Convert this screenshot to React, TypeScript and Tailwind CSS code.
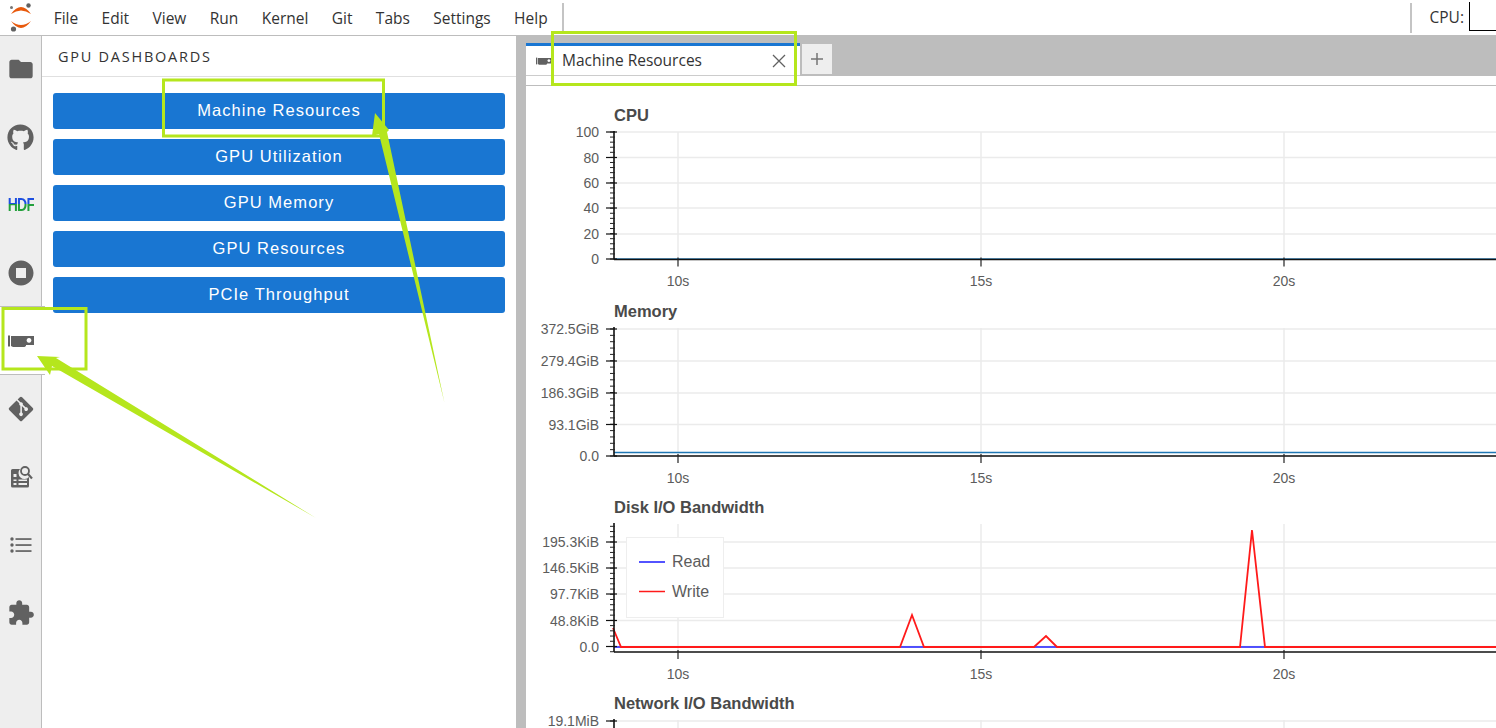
import React from "react";
import { FaGithub, FaGitAlt } from "react-icons/fa";

const UI = "font-['Open_Sans','Noto_Sans',sans-serif]";
const GRAY = "#616161";

function GpuIcon({ className }: { className?: string }) {
  return (
    <svg viewBox="0 0 26 12" className={className} fill={GRAY}>
      <rect x="0" y="0.5" width="2" height="11" />
      <path fillRule="evenodd" d="M3 1h23v9h-8v1l-1.5 1H5l-2-1zM21 3a2.400 2.400 0 1 0 0.010 0z" />
    </svg>
  );
}

const sideIcons: React.ReactNode[] = [
  <svg key="f" viewBox="0 0 24 24" className="w-7 h-7" fill={GRAY}>
    <path d="M10 4H4c-1.100 0-1.990.9-1.990 2L2 18c0 1.100.9 2 2 2h16c1.100 0 2-.9 2-2V8c0-1.100-.9-2-2-2h-8l-2-2z" />
  </svg>,
  <FaGithub key="g" className="w-[27px] h-[27px] text-[#616161]" />,
  <span
    key="h"
    className="font-['Liberation_Sans',sans-serif] font-bold text-[18px] leading-[14px] tracking-[-1px] scale-x-[0.78] bg-[linear-gradient(180deg,#1d4fe0_0%,#1d4fe0_40%,#23a03c_40%,#23a03c_100%)] bg-clip-text text-transparent"
  >
    HDF
  </span>,
  <svg key="s" viewBox="0 0 24 24" className="w-[30px] h-[30px]" fill={GRAY}>
    <path d="M12 2C6.480 2 2 6.480 2 12s4.480 10 10 10 10-4.480 10-10S17.520 2 12 2zm4 14H8V8h8v8z" />
  </svg>,
  <GpuIcon key="c" className="w-[26px] h-3" />,
  <FaGitAlt key="a" className="w-[28px] h-[28px] text-[#616161]" />,
  <svg key="d" viewBox="0 0 24 24" className="w-6 h-6" fill={GRAY}>
    <path
      fillRule="evenodd"
      d="M2 5.500Q2 4 3.500 4H11a6 6 0 0 0 9 8v9q0 1.500-1.500 1.500h-15Q2 22.500 2 21zM4.500 9v3h3V9zM4.500 14.500V16h3v-1.500zM9.500 14.500V16h8.500v-1.500zM4.500 18v2h3v-2zM9.500 18v2h8.500v-2z"
    />
    <circle cx="16" cy="6" r="4" fill="none" stroke={GRAY} strokeWidth="1.800" />
    <line x1="19" y1="9" x2="23" y2="13.500" stroke={GRAY} strokeWidth="2.200" />
  </svg>,
  <svg key="l" viewBox="0 0 22 16" className="w-[22px] h-4" fill={GRAY}>
    <circle cx="2" cy="2" r="1.700" />
    <circle cx="2" cy="8" r="1.700" />
    <circle cx="2" cy="14" r="1.700" />
    <rect x="5.500" y="1.200" width="16" height="1.700" />
    <rect x="5.500" y="7.200" width="16" height="1.700" />
    <rect x="5.500" y="13.200" width="16" height="1.700" />
  </svg>,
  <svg key="p" viewBox="0 0 24 24" className="w-7 h-7" fill={GRAY}>
    <path d="M20.500 11H19V7c0-1.100-.9-2-2-2h-4V3.500C13 2.120 11.880 1 10.500 1S8 2.120 8 3.500V5H4c-1.100 0-1.990.9-1.990 2v3.800H3.500c1.490 0 2.700 1.210 2.700 2.700s-1.210 2.700-2.700 2.700H2V20c0 1.100.9 2 2 2h3.800v-1.500c0-1.490 1.210-2.700 2.700-2.700 1.490 0 2.700 1.210 2.700 2.700V22H17c1.100 0 2-.9 2-2v-4h1.500c1.380 0 2.500-1.120 2.500-2.500S21.880 11 20.500 11z" />
  </svg>,
];

const menus = ["File", "Edit", "View", "Run", "Kernel", "Git", "Tabs", "Settings", "Help"];
const buttons = ["Machine Resources", "GPU Utilization", "GPU Memory", "GPU Resources", "PCIe Throughput"];

type Tick = { label: string; y: number };
type ChartSpec = {
  title: string;
  ticks: Tick[];
  axisY: number;
  topY: number;
  xLabels?: boolean;
  children?: React.ReactNode;
};

// Chart coordinates: x is page x - 526; y is measured from the top of the svg.
const PLOT_X = 88;
const GRID_X = [152, 455, 758];

function Chart({ title, ticks, axisY, topY, xLabels = true, children }: ChartSpec) {
  const step = ticks.length > 1 ? (ticks[ticks.length - 1].y - ticks[0].y) / (ticks.length - 1) : 26;
  const minors: number[] = [];
  const base = ticks[ticks.length - 1].y;
  for (let i = 0; ; i++) {
    const y = base - (i * step) / 5;
    if (y < topY - 0.5) break;
    minors.push(y);
  }
  for (let i = 1; base + (i * step) / 5 < axisY; i++) minors.push(base + (i * step) / 5);
  return (
    <div className="h-[196px] shrink-0 overflow-hidden">
      <div className="h-[18px] pl-[88px] font-['Liberation_Sans',sans-serif] text-[16.500px] leading-[18px] font-bold text-[#4a4a4a]">
        {title}
      </div>
      <svg width="970" height="178" className="block font-['Liberation_Sans',sans-serif]">
        {GRID_X.map((x) => (
          <line key={x} x1={x} x2={x} y1={topY} y2={axisY} stroke="#ebebeb" strokeWidth="1.500" />
        ))}
        {ticks.map((t) => (
          <line key={t.y} x1={PLOT_X} x2={970} y1={t.y} y2={t.y} stroke="#ebebeb" strokeWidth="1.500" />
        ))}
        {children}
        <line x1={PLOT_X} x2={970} y1={axisY} y2={axisY} stroke="#111" strokeWidth="1.300" />
        <line x1={PLOT_X} x2={PLOT_X} y1={topY - 1} y2={axisY} stroke="#111" strokeWidth="1.600" />
        {minors.map((y) => (
          <line key={y} x1={PLOT_X - 4} x2={PLOT_X + 1} y1={y} y2={y} stroke="#222" strokeWidth="1" />
        ))}
        {ticks.map((t) => (
          <g key={t.y}>
            <line x1={PLOT_X - 8} x2={PLOT_X + 3} y1={t.y} y2={t.y} stroke="#111" strokeWidth="1.200" />
            <text x={PLOT_X - 15} y={t.y + 5} textAnchor="end" fontSize="14" fill="#5c5c5c">
              {t.label}
            </text>
          </g>
        ))}
        {xLabels &&
          GRID_X.map((x, i) => (
            <g key={x}>
              <line x1={x} x2={x} y1={axisY - 2} y2={axisY + 7} stroke="#222" strokeWidth="1.200" />
              <text x={x} y={Math.floor(axisY) + 27} textAnchor="middle" fontSize="14" fill="#5c5c5c">
                {["10s", "15s", "20s"][i]}
              </text>
            </g>
          ))}
      </svg>
    </div>
  );
}

function Annotations() {
  const G = "#b5e61d";
  return (
    <svg width="1496" height="728" className="absolute left-0 top-0 z-20 pointer-events-none">
      <rect x="163.500" y="80" width="220" height="56" fill="none" stroke={G} strokeWidth="3" />
      <rect x="552.500" y="32.500" width="243" height="52" fill="none" stroke={G} strokeWidth="3" />
      <rect x="3" y="308.500" width="83" height="60.500" fill="none" stroke={G} strokeWidth="3" />
      <polygon fill={G} points="444.500,403 387,132 389,130 375,113 372,136 379,134" />
      <polygon fill={G} points="316,518 56,358 60,357 37,356 50,375 52,366" />
    </svg>
  );
}

export default function App() {
  const toX = (x: number) => x - 526;
  const diskY = (y: number) => y - 516;
  const red = [
    [613, 628], [621, 647], [900, 647], [912, 615], [924, 647], [1034, 647], [1046, 636],
    [1057, 647], [1240, 647], [1252, 530], [1265, 647], [1496, 647],
  ]
    .map(([x, y]) => `${toX(x)},${diskY(y)}`)
    .join(" ");

  return (
    <div className={`relative w-[1496px] h-[728px] overflow-hidden bg-white ${UI}`}>
      {/* Top bar */}
      <header className="h-9 flex items-center border-b border-[#bdbdbd] bg-white">
        <div className="w-[42px] shrink-0 flex justify-start pl-[8.500px]">
          <svg width="24" height="30" viewBox="0 0 24 30">
            <path d="M2 11Q12 -3 22 11Q12 4 2 11z" fill="#e8590c" />
            <path d="M2 18Q12 32 22 18Q12 26 2 18z" fill="#e8590c" />
            <circle cx="2.500" cy="4.500" r="1.500" fill="#757575" />
            <circle cx="19.500" cy="2.500" r="2.200" fill="#616161" />
            <circle cx="4.500" cy="26" r="2.600" fill="#616161" />
          </svg>
        </div>
        <nav className="flex items-center text-[15.500px] text-[#333333]">
          {menus.map((m) => (
            <span key={m} className="px-[11.700px] leading-5">
              {m}
            </span>
          ))}
        </nav>
        <div className="ml-[3px] h-[30px] w-0.5 bg-[#c4c4c4]" />
        <div className="ml-auto flex items-center h-full">
          <div className="h-[30px] w-0.5 bg-[#c4c4c4]" />
          <span className="ml-[18px] text-[15.500px] text-[#333333]">CPU:</span>
          <div className="ml-[5px] mb-[3px] h-[29px] w-[27px] border-l border-b border-black" />
        </div>
      </header>

      <div className="flex h-[692px]">
        {/* Activity bar */}
        <aside className="w-[42px] shrink-0 flex flex-col bg-[#eeeeee] border-r border-[#bdbdbd]">
          <div className="-mt-px flex flex-col">
            {sideIcons.map((icon, i) => (
              <div
                key={i}
                className={
                  i === 4
                    ? "-mt-px h-[69px] w-[45px] shrink-0 flex items-center pl-2 bg-white border-y border-[#bdbdbd] z-10"
                    : "h-[68px] shrink-0 flex items-center justify-center"
                }
              >
                {icon}
              </div>
            ))}
          </div>
        </aside>

        {/* Side panel */}
        <section className="w-[474px] shrink-0 bg-white">
          <div className="h-[41px] flex items-center pl-4 pt-[2px] border-b border-[#e0e0e0] text-[14.500px] tracking-[1.750px] text-[#333333]">
            GPU DASHBOARDS
          </div>
          <div className="flex flex-col gap-2.5 pl-[11px] pr-[11px] pt-4">
            {buttons.map((b) => (
              <div
                key={b}
                className="h-9 pb-[2px] rounded-[3px] bg-[#1976d2] flex items-center justify-center text-white font-['Liberation_Sans',sans-serif] text-[16.500px] tracking-[1.050px]"
              >
                {b}
              </div>
            ))}
          </div>
        </section>

        {/* Main area */}
        <main className="flex-1 min-w-0 bg-[#bdbdbd] pl-2.5 flex flex-col">
          <div className="h-10 shrink-0 flex items-start pt-[7px]">
            <div className="w-[274px] h-[33px] bg-white border-t-[3px] border-[#1976d2] flex items-center pl-2.5 pr-2 border-b border-b-[#cccccc]">
              <GpuIcon className="w-4 h-2 mr-[10px]" />
              <span className="text-[15.500px] text-[#333333] flex-1">Machine Resources</span>
              <svg width="14" height="14" viewBox="0 0 14 14" className="mr-[6px]">
                <path d="M1 1l12 12M13 1L1 13" stroke="#616161" strokeWidth="1.300" />
              </svg>
            </div>
            <div className="ml-0.5 w-[30px] h-[30px] mt-px bg-[#eeeeee] flex items-center justify-center">
              <svg width="14" height="14" viewBox="0 0 14 14">
                <path d="M7 1v12M1 7h12" stroke="#757575" strokeWidth="1.500" />
              </svg>
            </div>
          </div>
          <div className="h-2.5 shrink-0 bg-white border-b border-[#bdbdbd]" />
          <div className="flex-1 min-h-0 bg-white pt-5 flex flex-col overflow-hidden">
            <Chart
              title="CPU"
              topY={8}
              axisY={135.500}
              ticks={[
                { label: "100", y: 8 },
                { label: "80", y: 33.500 },
                { label: "60", y: 59 },
                { label: "40", y: 84 },
                { label: "20", y: 110 },
                { label: "0", y: 135 },
              ]}
            >
              <line x1={88} x2={970} y1={134.800} y2={134.800} stroke="#1f77b4" strokeWidth="1" />
            </Chart>
            <Chart
              title="Memory"
              topY={8}
              axisY={136}
              ticks={[
                { label: "372.5GiB", y: 9 },
                { label: "279.4GiB", y: 41 },
                { label: "186.3GiB", y: 73 },
                { label: "93.1GiB", y: 104.500 },
                { label: "0.0", y: 136 },
              ]}
            >
              <line x1={88} x2={970} y1={132.500} y2={132.500} stroke="#1f77b4" strokeWidth="1.500" />
            </Chart>
            <Chart
              title="Disk I/O Bandwidth"
              topY={8}
              axisY={136}
              ticks={[
                { label: "195.3KiB", y: 26 },
                { label: "146.5KiB", y: 52 },
                { label: "97.7KiB", y: 78 },
                { label: "48.8KiB", y: 104.500 },
                { label: "0.0", y: 130.500 },
              ]}
            >
              <line x1={88} x2={970} y1={131} y2={131} stroke="#1a1aff" strokeWidth="1.500" />
              <polyline points={red} fill="none" stroke="#ff1a1a" strokeWidth="1.800" />
              <rect x="100.500" y="21.500" width="97" height="80" fill="#ffffff" fillOpacity="0.950" stroke="#eeeeee" />
              <line x1="113" x2="139" y1="46" y2="46" stroke="#1a1aff" strokeWidth="1.500" />
              <line x1="113" x2="139" y1="75.500" y2="75.500" stroke="#ff1a1a" strokeWidth="1.500" />
              <text x="146" y="51" fontSize="16" fill="#5c5c5c">Read</text>
              <text x="146" y="81" fontSize="16" fill="#5c5c5c">Write</text>
            </Chart>
            <Chart
              title="Network I/O Bandwidth"
              topY={8}
              axisY={136}
              xLabels={false}
              ticks={[
                { label: "19.1MiB", y: 9 },
                { label: "", y: 136 },
              ]}
            />
          </div>
        </main>
      </div>
      <Annotations />
    </div>
  );
}
